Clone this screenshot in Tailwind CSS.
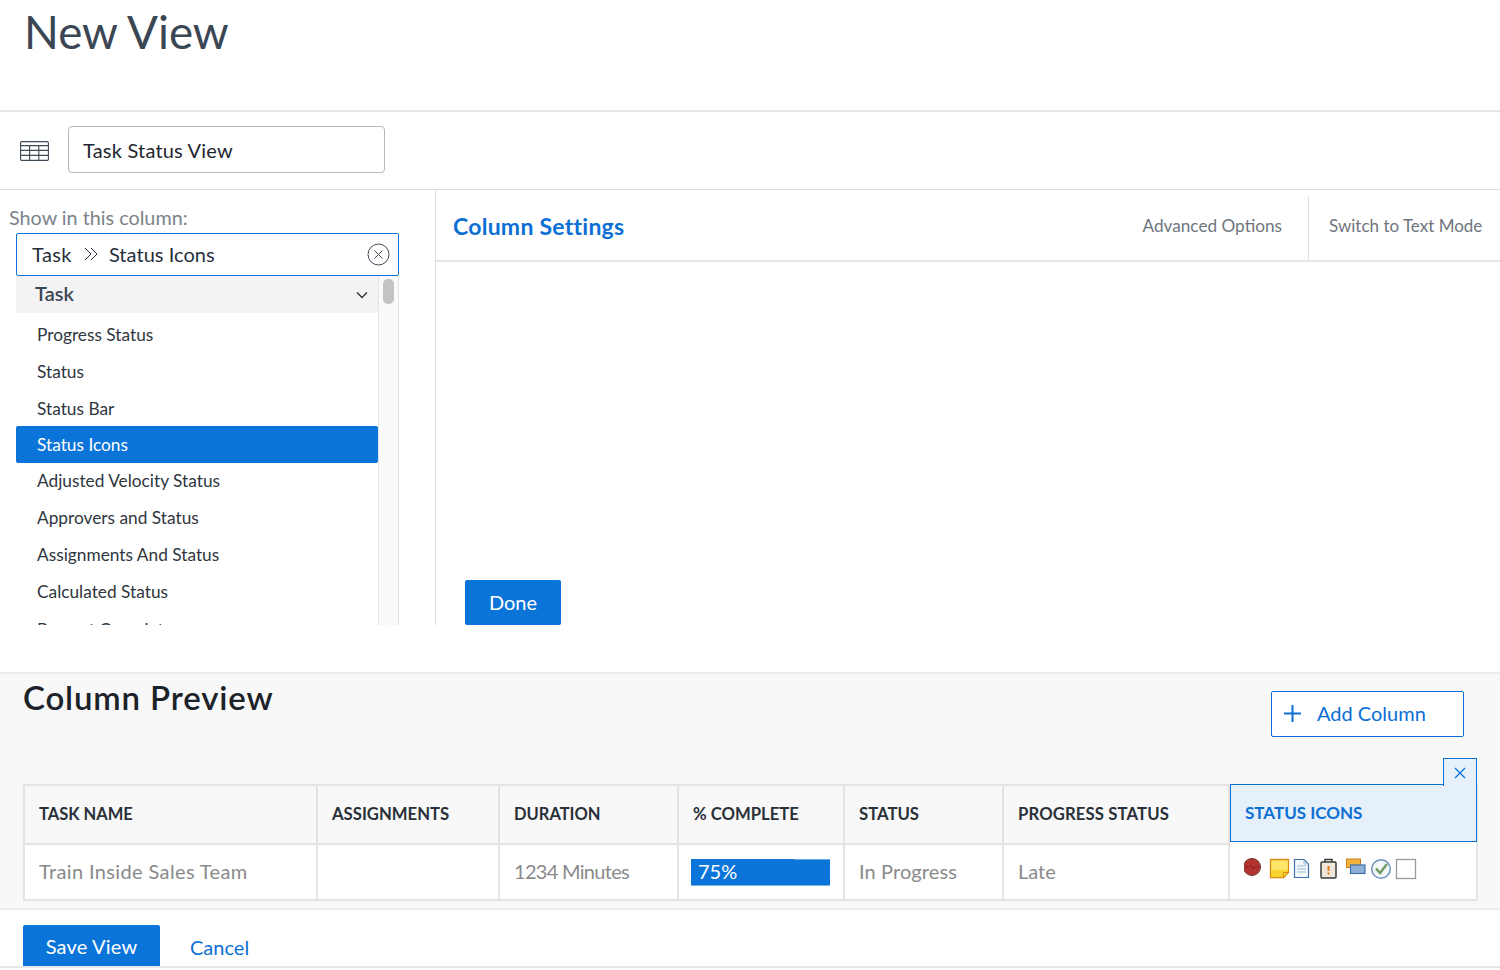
<!DOCTYPE html>
<html lang="en">
<head>
<meta charset="UTF-8">
<title>New View</title>
<script src="https://cdn.jsdelivr.net/npm/@tailwindcss/browser@4"></script>
</head>
<body class="bg-white font-['Lato','Open_Sans',sans-serif] overflow-hidden">
<div class="w-[1500px] h-[970px] flex flex-col overflow-hidden">

  <!-- title -->
  <div class="h-[112px] shrink-0 border-b-2 border-[#e6e6e6] pl-[24px] pt-[4px]">
    <h1 class="text-[45.7px] leading-[56px] text-[#3b4654]">New View</h1>
  </div>

  <!-- view name -->
  <div class="h-[78px] shrink-0 border-b border-[#dddddd] flex items-center pl-[20px]">
    <svg width="29" height="20" viewBox="0 0 29 20" fill="none" stroke="#3f4a57" stroke-width="1.1">
      <rect x="0.6" y="0.6" width="27.8" height="18.8" rx="1.2"/>
      <path d="M0.6 4.6h27.8M0.6 9.4h27.8M0.6 14.4h27.8M9.6 4.6v14.8M18.8 4.6v14.8"/>
    </svg>
    <div class="ml-[19px] mt-[-2px] w-[317px] h-[47px] border border-[#b4b8bd] rounded-[4px] flex items-center pl-[14px] text-[20px] tracking-[0.2px] text-[#1e2631]">Task Status View</div>
  </div>

  <!-- editor -->
  <div class="h-[435px] shrink-0 flex">
    <div class="w-[436px] shrink-0 border-r border-[#dddddd] pt-[16px] flex flex-col overflow-hidden">
      <div class="pl-[9px] text-[19.8px] leading-[23px] text-[#7d838a] h-[27px]">Show in this column:</div>
      <div class="ml-[16px] w-[383px] h-[43px] shrink-0 border border-[#0b74d9] rounded-[2px] flex items-center pl-[15px] pr-[8px] pb-[1px] text-[20px] text-[#25303c]">
        <span class="tracking-[0.4px]">Task</span>
        <svg class="ml-[12px]" width="14" height="14" viewBox="0 0 14 14" fill="none" stroke="#25303c" stroke-width="1"><path d="M1 1l6 6-6 6M7 1l6 6-6 6"/></svg>
        <span class="ml-[11px] tracking-[0.05px]">Status Icons</span>
        <svg class="ml-auto" width="23" height="23" viewBox="0 0 23 23" fill="none" stroke="#3f4a57" stroke-width="1"><circle cx="11.5" cy="11.5" r="10.5"/><path d="M7.5 7.5l8 8M15.5 7.5l-8 8"/></svg>
      </div>
      <div class="ml-[16px] w-[383px] flex-1 flex min-h-0 overflow-hidden">
        <div class="w-[362px] shrink-0">
          <div class="h-[37px] bg-[#f3f3f3] flex items-center pl-[19px] pr-[10px] pb-[3px] text-[20px] font-semibold text-[#3b4654]">
            Task
            <svg class="ml-auto mt-[3px]" width="12" height="8" viewBox="0 0 12 8" fill="none" stroke="#25303c" stroke-width="1.3"><path d="M1 1.5l5 5 5-5"/></svg>
          </div>
          <div class="h-[2px]"></div>
          <div class="h-[37px] flex items-center pl-[21px] pt-[3px] text-[17.3px] text-[#2f3640]">Progress Status</div>
          <div class="h-[37px] flex items-center pl-[21px] pt-[3px] text-[17.3px] text-[#2f3640]">Status</div>
          <div class="h-[37px] flex items-center pl-[21px] pt-[3px] text-[17.3px] text-[#2f3640]">Status Bar</div>
          <div class="h-[37px] flex items-center pl-[21px] pt-[1px] text-[17.3px] text-white bg-[#0b74d9] rounded-[2px]">Status Icons</div>
          <div class="h-[36px] flex items-center pl-[21px] text-[17.3px] text-[#2f3640]">Adjusted Velocity Status</div>
          <div class="h-[37px] flex items-center pl-[21px] pt-[1px] text-[17.3px] text-[#2f3640]">Approvers and Status</div>
          <div class="h-[37px] flex items-center pl-[21px] pt-[1px] text-[17.3px] text-[#2f3640]">Assignments And Status</div>
          <div class="h-[37px] flex items-center pl-[21px] pt-[1px] text-[17.3px] text-[#2f3640]">Calculated Status</div>
          <div class="h-[37px] flex items-center pl-[21px] pt-[3px] text-[17.3px] text-[#2f3640]">Percent Complete</div>
        </div>
        <div class="w-[21px] shrink-0 bg-[#fafafa] border-l border-r border-[#e4e4e4] pl-[4px] pt-[3px]">
          <div class="w-[11px] h-[25px] rounded-[5px] bg-[#c3c3c3]"></div>
        </div>
      </div>
    </div>

    <div class="flex-1 flex flex-col">
      <div class="h-[72px] shrink-0 border-b-2 border-[#e6e6e6] flex items-stretch">
        <div class="pl-[17px] flex items-center text-[23px] tracking-[0.25px] font-bold text-[#0b6fd4] pt-[2px]">Column Settings</div>
        <div class="ml-auto pr-[26px] flex items-center text-[17.2px] text-[#6e757d] pt-[2px]">Advanced Options</div>
        <div class="mt-[6px] border-l border-[#dddddd] w-[192px] pl-[20px] pb-[4px] flex items-center text-[17px] text-[#6e757d]">Switch to Text Mode</div>
      </div>
      <div class="flex-1"></div>
      <button class="ml-[29px] w-[96px] h-[45px] pb-[2px] bg-[#0b74d9] text-white text-[20px] rounded-[2px]">Done</button>
    </div>
  </div>

  <div class="h-[47px] shrink-0"></div>

  <!-- preview -->
  <div class="h-[238px] shrink-0 bg-[#f8f8f8] border-t-2 border-b-2 border-[#ececec] px-[23px] relative">
    <div class="flex items-start h-[110px]">
      <h2 class="text-[33px] leading-[44px] mt-[1px] tracking-[0.85px] font-semibold text-[#1c2229]">Column Preview</h2>
      <button class="ml-auto mr-[13px] mt-[17px] w-[193px] h-[46px] pb-[2px] border border-[#0b6fd4] rounded-[2px] bg-white flex items-center pl-[12px] text-[20px] text-[#0b6fd4]">
        <svg width="17" height="17" viewBox="0 0 17 17" fill="none" stroke="#0b6fd4" stroke-width="2"><path d="M8.5 0v17M0 8.5h17"/></svg>
        <span class="ml-[16px]">Add Column</span>
      </button>
    </div>

    <div class="w-[1455px] grid grid-cols-[293px_182px_179px_166px_159px_226px_246px] border-2 border-[#e4e4e4] bg-white">
      <div class="h-[59px] bg-[#f8f8f8] border-r-2 border-b-2 border-[#e4e4e4] flex items-center pl-[14px] text-[16.5px] font-bold text-[#2a3038]">TASK NAME</div>
      <div class="h-[59px] bg-[#f8f8f8] border-r-2 border-b-2 border-[#e4e4e4] flex items-center pl-[14px] text-[16.7px] font-bold text-[#2a3038]">ASSIGNMENTS</div>
      <div class="h-[59px] bg-[#f8f8f8] border-r-2 border-b-2 border-[#e4e4e4] flex items-center pl-[14px] text-[16.5px] font-bold text-[#2a3038]">DURATION</div>
      <div class="h-[59px] bg-[#f8f8f8] border-r-2 border-b-2 border-[#e4e4e4] flex items-center pl-[14px] text-[16.7px] font-bold text-[#2a3038]">% COMPLETE</div>
      <div class="h-[59px] bg-[#f8f8f8] border-r-2 border-b-2 border-[#e4e4e4] flex items-center pl-[14px] text-[16.7px] font-bold text-[#2a3038]">STATUS</div>
      <div class="h-[59px] bg-[#f8f8f8] border-r-2 border-b-2 border-[#e4e4e4] flex items-center pl-[14px] text-[16.7px] tracking-[0.12px] font-bold text-[#2a3038]">PROGRESS STATUS</div>
      <div class="h-[58px] w-[247px] bg-[#e6f0fb] border border-[#0b6fd4] flex items-center pl-[14px] text-[17px] font-bold text-[#0b6fd4] -mt-[2px]">STATUS ICONS</div>

      <div class="h-[54px] border-r-2 border-[#e4e4e4] flex items-center pl-[14px] pb-[2px] text-[20px] tracking-[0.37px] text-[#8a8a8a]">Train Inside Sales Team</div>
      <div class="h-[54px] border-r-2 border-[#e4e4e4]"></div>
      <div class="h-[54px] border-r-2 border-[#e4e4e4] flex items-center pl-[14px] pb-[2px] text-[20px] tracking-[-0.7px] text-[#8a8a8a]">1234 Minutes</div>
      <div class="h-[54px] border-r-2 border-[#e4e4e4] flex items-center pl-[12px]">
        <div class="relative w-[139px] h-[27px] bg-[#0b74d9] border-b border-[#7fb4e8] flex items-center pl-[7px] pb-[2px] text-[20px] text-white">
          75%
          <div class="absolute right-0 top-0 w-[36px] h-[1px] bg-[#6aa9e6]"></div>
        </div>
      </div>
      <div class="h-[54px] border-r-2 border-[#e4e4e4] flex items-center pl-[14px] pb-[2px] text-[20px] tracking-[0.1px] text-[#8a8a8a]">In Progress</div>
      <div class="h-[54px] border-r-2 border-[#e4e4e4] flex items-center pl-[14px] pb-[2px] text-[20px] text-[#8a8a8a]">Late</div>
      <div class="h-[54px] pl-[14px] pt-[11px]">
        <svg width="180" height="24" viewBox="0 0 180 24" fill="none">
          <circle cx="8" cy="11" r="8.500" fill="#b3332e" stroke="#6d3b38"/>
          <path d="M0.500 11h5l1.500-2 2 4 1.500-2h5.500" stroke="#7e1f1c" stroke-width="0.800"/>
          <path d="M26.500 3.500h18v13l-5 5h-13z" fill="#fde76a" stroke="#d98c12" stroke-width="1.300"/>
          <path d="M27 14h17v2.500l-5 4.500h-12z" fill="#f8d22e"/>
          <path d="M44.500 16.500h-5v5" stroke="#d98c12"/>
          <path d="M50.500 3.500h9.500l4.500 4.500v13.500h-14z" fill="#f4f8fd" stroke="#3d72ad" stroke-width="1.200"/>
          <path d="M60 3.500v4.500h4.500M53 10h9M53 13h9M53 16h9" stroke="#9db9d8"/>
          <rect x="77" y="6" width="15" height="16" rx="1" fill="#efe8da" stroke="#3a3a3a" stroke-width="1.500"/>
          <path d="M81 6V3.500h7V6" stroke="#3a3a3a" stroke-width="1.500"/>
          <rect x="83.500" y="10" width="2" height="5" fill="#d97a14"/>
          <rect x="83.500" y="16.500" width="2" height="2" fill="#d97a14"/>
          <rect x="102.500" y="3" width="14" height="8.500" fill="#f3b33d" stroke="#cf7d1a"/>
          <rect x="106.500" y="9" width="14.500" height="8.500" fill="#8fb0d6" stroke="#3d6ea8" stroke-width="1.200"/>
          <circle cx="137" cy="13" r="9.300" fill="#f4f7fa" stroke="#6f93bd" stroke-width="1.500"/>
          <path d="M132 12.500l4 4.500 7-9" stroke="#6c9a63" stroke-width="2.400"/>
          <rect x="152.500" y="3.500" width="19" height="19" fill="#fff" stroke="#9a9a9a" stroke-width="1.300"/>
        </svg>
      </div>
    </div>

    <div class="absolute left-[1443px] top-[84px] w-[34px] h-[28px] bg-[#e6f0fb] border border-[#0b6fd4] border-b-0 flex items-center justify-center">
      <svg width="12" height="12" viewBox="0 0 12 12" fill="none" stroke="#0b6fd4" stroke-width="1.300"><path d="M1 1l10 10M11 1L1 11"/></svg>
    </div>
  </div>

  <!-- footer -->
  <div class="h-[58px] shrink-0 border-b-2 border-[#e6e6e6] pl-[23px] pt-[15px] flex items-start">
    <button class="w-[137px] h-[41px] bg-[#0b74d9] text-white text-[20px] tracking-[0.2px] rounded-t-[2px]">Save View</button>
    <span class="ml-[30px] mt-[7px] text-[20px] text-[#0b6fd4]">Cancel</span>
  </div>
</div>
</body>
</html>
